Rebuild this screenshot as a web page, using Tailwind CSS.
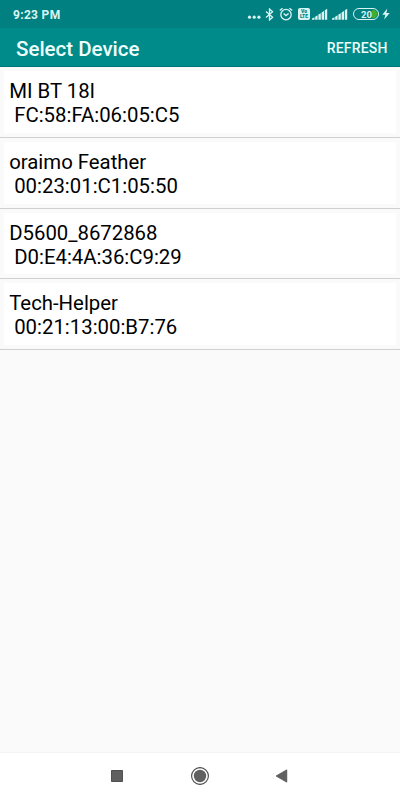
<!DOCTYPE html>
<html lang="en">

<head>
    <meta charset="UTF-8" />
    <meta name="viewport" content="width=device-width, initial-scale=1.0" />
    <script src="https://cdn.jsdelivr.net/npm/@tailwindcss/browser@4"></script>
    <title>Select Device</title>
</head>

<body class="h-screen flex flex-col overflow-hidden bg-[#fafafa] font-[Roboto,sans-serif] text-black">
    <!-- Status bar -->
    <div class="h-7 shrink-0 bg-[#008080] text-[#d9f5f3] flex items-center justify-between pl-[13px] pr-[10px]">
        <span class="text-[12px] tracking-[.32px] font-bold leading-none pt-px">9:23 PM</span>
        <div class="flex items-center">
            <svg class="w-[14px] h-3" viewBox="0 0 14 12" fill="currentColor">
                <circle cx="2.5" cy="9.2" r="1.6" />
                <circle cx="7.2" cy="9.2" r="1.6" />
                <circle cx="11.9" cy="9.2" r="1.6" />
            </svg>
            <svg class="w-[9px] h-[13px] ml-[4px]" viewBox="0 0 9 13" fill="none" stroke="currentColor" stroke-width="1.3">
                <path d="M1 3.6 7.6 9.2 4.5 12V1L7.6 3.8 1 9.4" />
            </svg>
            <svg class="w-[14px] h-[14px] ml-[5px]" viewBox="0 0 14 14" fill="none" stroke="currentColor" stroke-width="1.3">
                <circle cx="7" cy="7.6" r="5.2" />
                <path d="M.8 3.6 3.6 1.2M13.2 3.6 10.4 1.2M4.6 6.4 7 8.6 9.6 6.4" />
            </svg>
            <div class="w-[12px] h-[12px] ml-[5px] rounded-[2px] bg-[#d9f5f3] text-[#008080] text-[5px] font-black flex flex-col items-center">
                <span class="h-[6px] leading-[6px]">Vo</span>
                <span class="h-[6px] leading-[5px]">LTE</span>
            </div>
            <svg class="w-4 h-[12px] ml-[2px]" viewBox="0 0 16 12" fill="currentColor">
                <path d="M0 10.5 2.5 9.3v2.5H0zM3.2 8.8l2.4-1.5v4.5H3.2zM6.4 6.6l2.4-1.4v6.6H6.4zM9.6 4.5 12 3v8.8H9.6zM12.8 2.3l2.4-1.5v11h-2.4z" />
            </svg>
            <svg class="w-4 h-[12px] ml-1" viewBox="0 0 16 12" fill="currentColor">
                <path d="M0 10.5 2.5 9.3v2.5H0zM3.2 8.8l2.4-1.5v4.5H3.2zM6.4 6.6l2.4-1.4v6.6H6.4zM9.6 4.5 12 3v8.8H9.6zM12.8 2.3l2.4-1.5v11h-2.4z" />
            </svg>
            <div class="w-[26px] h-[12px] ml-[5px] rounded-full border border-[#d9f5f3] p-px flex">
                <span class="w-[17px] text-[9.5px] leading-[9px] font-bold text-right">20</span>
                <span class="w-[5px] h-full ml-auto rounded-r-full bg-[#43b02a]"></span>
            </div>
            <svg class="w-[8px] h-[12px] ml-[3px]" viewBox="0 0 8 12" fill="currentColor">
                <path d="M5.3.6.3 6.7h3L2.2 11.4 7.7 5H4.4z" />
            </svg>
        </div>
    </div>

    <!-- App bar -->
    <div class="h-[39px] shrink-0 bg-[#008b8b] border-b border-[#007578] text-[#effffd] flex items-center justify-between pl-4 pr-[12.5px] font-medium">
        <h1 class="text-[20.5px] leading-6 pt-[3px]">Select Device</h1>
        <button class="text-[14px] tracking-[.16px] leading-5 pt-[2px]">REFRESH</button>
    </div>

    <!-- Paired devices -->
    <ul class="flex-1 text-[20.35px] leading-[24px]">
        <li class="h-[70.75px] p-1 border-b border-[#d0d0d0]">
            <div class="h-full bg-white pl-[5.2px] pt-2">
                <p>MI BT 18I</p>
                <p class="pl-[5px]">FC:58:FA:06:05:C5</p>
            </div>
        </li>
        <li class="h-[70.75px] p-1 border-b border-[#d0d0d0]">
            <div class="h-full bg-white pl-[5.2px] pt-2">
                <p>oraimo Feather</p>
                <p class="pl-[5px]">00:23:01:C1:05:50</p>
            </div>
        </li>
        <li class="h-[70.75px] p-1 border-b border-[#d0d0d0]">
            <div class="h-full bg-white pl-[5.2px] pt-2">
                <p>D5600_8672868</p>
                <p class="pl-[5px]">D0:E4:4A:36:C9:29</p>
            </div>
        </li>
        <li class="h-[70.75px] p-1 border-b border-[#d0d0d0]">
            <div class="h-full bg-white pl-[5.2px] pt-2">
                <p>Tech-Helper</p>
                <p class="pl-[5px]">00:21:13:00:B7:76</p>
            </div>
        </li>
    </ul>

    <!-- Navigation bar -->
    <div class="h-12 shrink-0 bg-white border-t border-[#f4f4f4] pb-[2px] flex items-center justify-center gap-[65px] text-[#606060]">
        <svg class="w-4 h-5" viewBox="0 0 16 20">
            <path d="M2.5 4.5h11v11h-11z" fill="currentColor" stroke="#505050" />
        </svg>
        <svg class="w-5 h-5" viewBox="0 0 20 20">
            <circle cx="10" cy="10" r="8.4" fill="none" stroke="#444" stroke-width="1.1" />
            <circle cx="10" cy="10" r="6.2" fill="currentColor" />
        </svg>
        <svg class="w-4 h-5" viewBox="0 0 16 20">
            <path d="M1 10 11.8 3.8v12.4z" fill="currentColor" stroke="#505050" stroke-width=".7" />
        </svg>
    </div>
</body>

</html>
